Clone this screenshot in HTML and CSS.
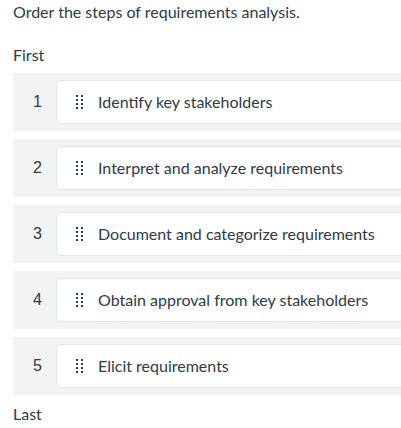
FILE: index.html
```html
<!DOCTYPE html>
<html>
<head>
<meta charset="utf-8">
<link rel="stylesheet" href="styles.css">
</head>
<body>
<div class="page">
  <p class="prompt">Order the steps of requirements analysis.</p>
  <p class="label first">First</p>
  <ol class="list">
    <li class="row"><span class="num">1</span><div class="card"><span class="handle"><i></i><i></i><i></i><i></i><i></i><i></i><i></i><i></i></span><span class="text">Identify key stakeholders</span></div></li>
    <li class="row"><span class="num">2</span><div class="card"><span class="handle"><i></i><i></i><i></i><i></i><i></i><i></i><i></i><i></i></span><span class="text">Interpret and analyze requirements</span></div></li>
    <li class="row"><span class="num">3</span><div class="card"><span class="handle"><i></i><i></i><i></i><i></i><i></i><i></i><i></i><i></i></span><span class="text">Document and categorize requirements</span></div></li>
    <li class="row"><span class="num">4</span><div class="card"><span class="handle"><i></i><i></i><i></i><i></i><i></i><i></i><i></i><i></i></span><span class="text">Obtain approval from key stakeholders</span></div></li>
    <li class="row"><span class="num">5</span><div class="card"><span class="handle"><i></i><i></i><i></i><i></i><i></i><i></i><i></i><i></i></span><span class="text">Elicit requirements</span></div></li>
  </ol>
  <p class="label last">Last</p>
</div>
</body>
</html>
```
FILE: styles.css
```css
html, body {
  margin: 0;
  padding: 0;
  background: #ffffff;
  overflow: hidden;
}
.page {
  padding: 0 0 0 13px;
  font-family: Lato, "Liberation Sans", sans-serif;
  font-size: 16px;
  color: #2d3b45;
  width: 400px;
}
.prompt {
  margin: 0;
  padding-top: 2px;
  line-height: 20px;
}
.label {
  margin: 0;
  line-height: 20px;
}
.first {
  margin-top: 23px;
  margin-bottom: 8px;
}
.last {
  margin-top: 9px;
}
.list {
  list-style: none;
  margin: 0;
  padding: 0;
  display: flex;
  flex-direction: column;
  gap: 8px;
}
.row {
  display: flex;
  align-items: stretch;
  background: #f2f3f3;
  padding: 7px 0;
}
.num {
  width: 37px;
  padding-left: 6px;
  display: flex;
  align-items: center;
  justify-content: center;
  font-family: "Liberation Sans", Arial, sans-serif;
  font-size: 16px;
  color: #2d3b45;
}
.card {
  flex: 1;
  height: 42px;
  background: #ffffff;
  border: 1px solid #e4e6e8;
  border-radius: 4px;
  display: flex;
  align-items: center;
  padding-left: 19px;
}
.handle {
  display: grid;
  grid-template-columns: 2px 2px;
  grid-auto-rows: 2px;
  column-gap: 3px;
  row-gap: 2.33px;
  margin-right: 15px;
}
.handle i {
  display: block;
  width: 2px;
  height: 2px;
  background: #2d3b45;
}
.text {
  line-height: 20px;
}
```
